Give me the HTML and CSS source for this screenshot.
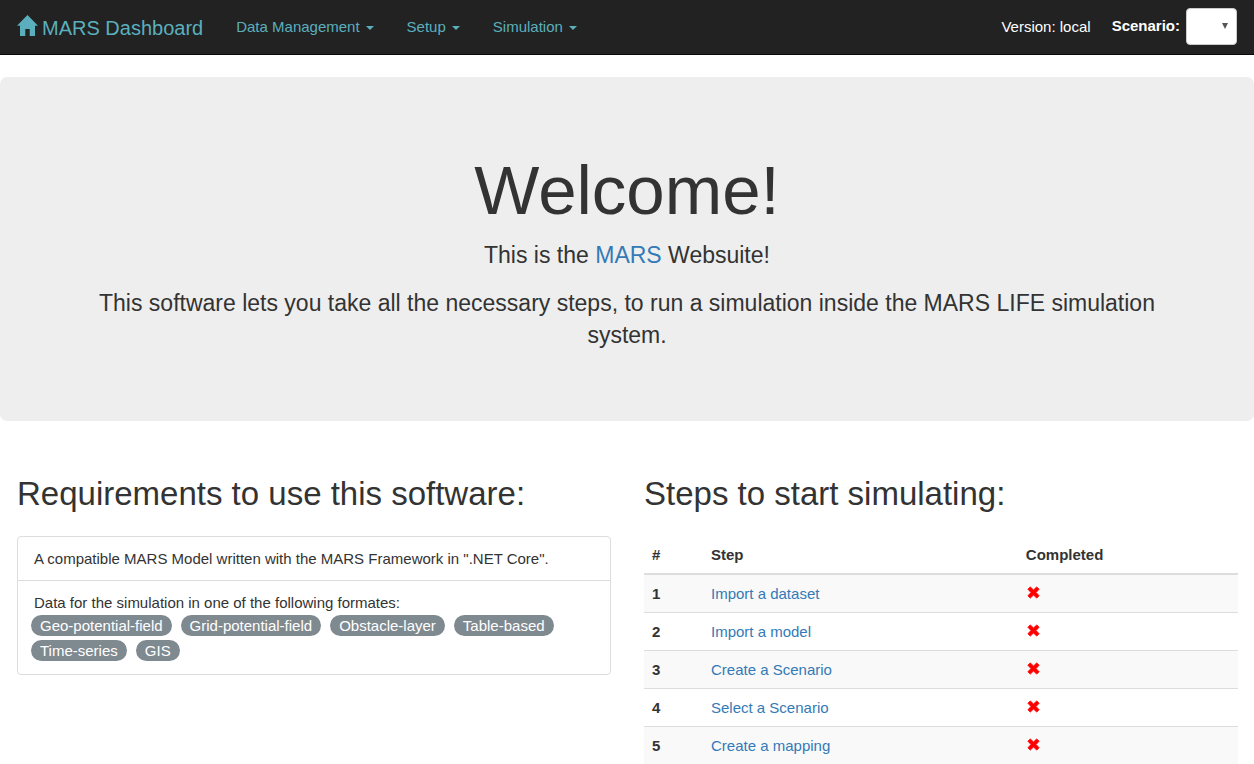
FILE: index.html
```html
<!DOCTYPE html>
<html lang="en">
<head>
<meta charset="utf-8">
<meta name="viewport" content="width=device-width, initial-scale=1">
<title>MARS Dashboard</title>
<link rel="stylesheet" href="styles.css">
</head>
<body>
<svg class="sprite" aria-hidden="true">
  <symbol id="cross" viewBox="0 0 14 14"><path d="M3.5 1 7 4.3 10.5 1 13 3.5 9.7 7 13 10.5 10.5 13 7 9.7 3.5 13 1 10.5 4.3 7 1 3.5Z" stroke-width="1" stroke-linejoin="round"/></symbol>
  <symbol id="caret" viewBox="0 0 8 4"><path d="M0 0H8L4 4Z"/></symbol>
</svg>
<nav class="navbar">
  <a class="brand" href="#">
    <svg class="home" viewBox="0 0 21 21" aria-hidden="true"><path d="M10.5 0 21 10.8H18V21H12.7V14H8.3V21H3V10.8H0Z"/></svg>
    <span>MARS Dashboard</span>
  </a>
  <div class="menu">
    <button class="menu-item" type="button">Data Management <svg class="caret" aria-hidden="true"><use href="#caret"/></svg></button>
    <button class="menu-item" type="button">Setup <svg class="caret" aria-hidden="true"><use href="#caret"/></svg></button>
    <button class="menu-item" type="button">Simulation <svg class="caret" aria-hidden="true"><use href="#caret"/></svg></button>
  </div>
  <span class="version">Version: local</span>
  <div class="scenario">
    <label for="scenario">Scenario:</label>
    <div class="select-wrap">
      <select id="scenario"><option></option></select>
      <svg class="arrow" viewBox="0 0 6 6" aria-hidden="true"><path d="M0 0H6L3 6Z"/></svg>
    </div>
  </div>
</nav>
<header class="jumbotron">
  <h1>Welcome!</h1>
  <p>This is the <a href="#">MARS</a> Websuite!</p>
  <p>This software lets you take all the necessary steps, to run a simulation inside the MARS LIFE simulation system.</p>
</header>
<main class="columns">
  <section>
    <h2>Requirements to use this software:</h2>
    <ul class="list">
      <li>A compatible MARS Model written with the MARS Framework in ".NET Core".</li>
      <li>Data for the simulation in one of the following formates:
        <div class="badges">
          <span class="badge">Geo-potential-field</span>
          <span class="badge">Grid-potential-field</span>
          <span class="badge">Obstacle-layer</span>
          <span class="badge">Table-based</span>
          <span class="badge">Time-series</span>
          <span class="badge">GIS</span>
        </div>
      </li>
    </ul>
  </section>
  <section>
    <h2>Steps to start simulating:</h2>
    <table class="steps">
      <thead>
        <tr><th class="col-number" scope="col">#</th><th class="col-step" scope="col">Step</th><th scope="col">Completed</th></tr>
      </thead>
      <tbody>
        <tr><th scope="row">1</th><td><a href="#">Import a dataset</a></td><td><svg class="cross" role="img" aria-label="No"><use href="#cross"/></svg></td></tr>
        <tr><th scope="row">2</th><td><a href="#">Import a model</a></td><td><svg class="cross" role="img" aria-label="No"><use href="#cross"/></svg></td></tr>
        <tr><th scope="row">3</th><td><a href="#">Create a Scenario</a></td><td><svg class="cross" role="img" aria-label="No"><use href="#cross"/></svg></td></tr>
        <tr><th scope="row">4</th><td><a href="#">Select a Scenario</a></td><td><svg class="cross" role="img" aria-label="No"><use href="#cross"/></svg></td></tr>
        <tr><th scope="row">5</th><td><a href="#">Create a mapping</a></td><td><svg class="cross" role="img" aria-label="No"><use href="#cross"/></svg></td></tr>
      </tbody>
    </table>
  </section>
</main>
</body>
</html>
```

FILE: styles.css
```css
* { box-sizing: border-box; }

body {
  margin: 0;
  background: #fff;
  color: #333;
  font: 15px/21px "Liberation Sans", Arial, sans-serif;
}

a { color: #337ab7; text-decoration: none; }

.sprite { position: absolute; width: 0; height: 0; }

/* Top bar */
.navbar {
  display: flex;
  align-items: center;
  padding: 8px 17px 9px;
  background: #222;
  border-bottom: 1px solid #080808;
  color: #fff;
}

.brand {
  display: flex;
  align-items: center;
  gap: 4px;
  padding-bottom: 2px;
  color: #5bafbd;
  font-size: 20px;
  line-height: 24px;
}

.brand span { padding-top: 4px; }

.home { width: 21px; height: 21px; fill: currentColor; }

.menu { display: flex; gap: 33px; margin-left: 33px; }

.menu-item {
  display: flex;
  align-items: center;
  gap: 6px;
  padding: 0;
  border: 0;
  background: none;
  color: #5bafbd;
  font: inherit;
}

.caret { width: 8px; height: 4px; margin-top: 2px; fill: currentColor; }

.version { margin-left: auto; }

.scenario { display: flex; align-items: center; gap: 6px; margin-left: 21px; }

.scenario label { padding-bottom: 2px; font-weight: bold; }

.select-wrap { position: relative; }

.select-wrap select {
  display: block;
  width: 51px;
  height: 37px;
  padding: 0 12px;
  border: 1px solid #ccc;
  border-radius: 4px;
  background: #fff;
  color: #555;
  font: inherit;
  appearance: none;
}

.arrow {
  position: absolute;
  top: 15px;
  right: 9px;
  width: 6px;
  height: 6px;
  fill: #555;
  pointer-events: none;
}

/* Welcome panel */
.jumbotron {
  margin: 22px 0 54px;
  padding: 76px 66px 54px;
  border-radius: 7px;
  background: #eee;
  text-align: center;
}

.jumbotron h1 {
  margin: 0 0 10px;
  font-size: 69px;
  font-weight: normal;
  line-height: 76px;
}

.jumbotron p { margin: 0 0 16px; font-size: 23px; line-height: 32px; }

/* Two-column content */
.columns {
  display: grid;
  grid-template-columns: 1fr 1fr;
  gap: 33px;
  padding: 0 16px 0 17px;
}

h2 {
  margin: 0 0 24px;
  font-size: 33px;
  font-weight: normal;
  line-height: 37px;
}

.list {
  margin: 0;
  padding: 0;
  border: 1px solid #ddd;
  border-radius: 4px;
  list-style: none;
}

.list li { padding: 11px 16px; }

.list li + li { border-top: 1px solid #ddd; padding-bottom: 13px; }

.badges { display: flex; flex-wrap: wrap; gap: 4px 9px; margin: 2px 0 0 -3px; }

.badge {
  padding: 0 9px;
  border-radius: 11px;
  background: #7f8990;
  color: #fff;
}

.steps { width: 100%; border-collapse: collapse; table-layout: fixed; text-align: left; }

.steps th,
.steps td { padding: 8px; border-top: 1px solid #ddd; vertical-align: top; }

.steps thead th { border-top: 0; border-bottom: 2px solid #ddd; }

.steps tbody tr:nth-child(odd) { background: #f9f9f9; }

.steps .col-number { width: 59px; }

.col-step { width: 53%; }

.cross { display: block; width: 13px; height: 13px; margin: 3px 0 0 1px; fill: #f00; stroke: #f00; }
```
